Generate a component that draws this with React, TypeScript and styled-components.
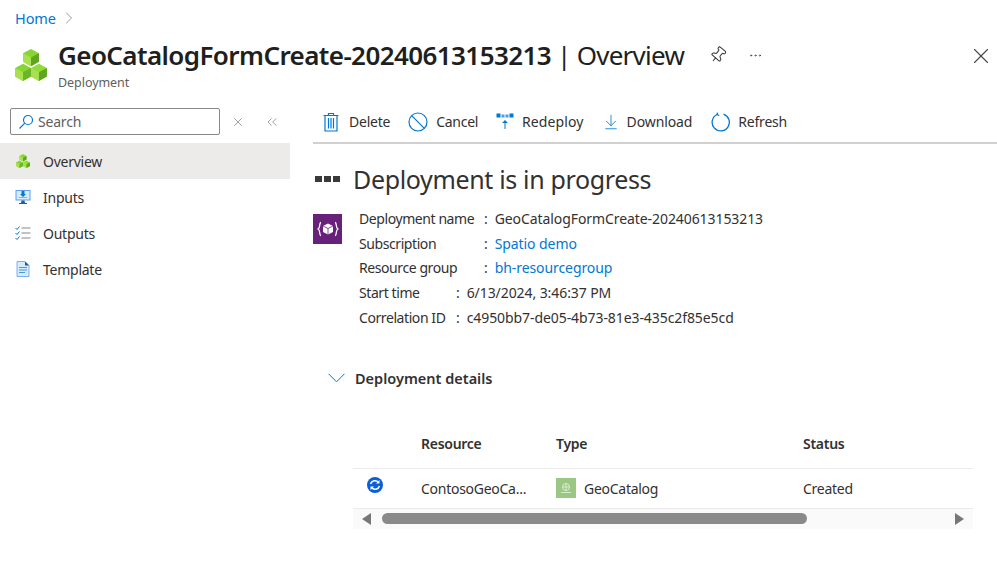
import React from "react";
import styled, { createGlobalStyle } from "styled-components";
import { ChevronRight, X, ChevronsLeft, Pin, MoreHorizontal, ArrowDownToLine } from "lucide-react";

const GlobalStyle = createGlobalStyle`
  html, body { margin: 0; padding: 0; background: #fff; }
  body {
    font-family: "Noto Sans", "Open Sans", "Liberation Sans", sans-serif;
    color: #323130;
    font-size: 14px;
    overflow: hidden;
  }
`;

const Page = styled.div`
  width: 997px;
  height: 568px;
  display: flex;
  flex-direction: column;
`;

const Breadcrumb = styled.nav`
  height: 35px;
  padding-left: 15px;
  display: flex;
  align-items: center;
  gap: 3px;
  color: #0078d4;
  font-size: 14.5px;
  letter-spacing: -0.1px;
  svg { color: #8a8886; }
`;

const Header = styled.header`
  height: 60px;
  display: flex;
  padding-left: 15px;
`;

const HeaderIcon = styled.svg`
  width: 32px;
  height: 32px;
  margin-top: 14px;
  flex: none;
`;

const TitleBlock = styled.div`
  margin-left: 11px;
  padding-top: 2px;
`;

const Title = styled.h1`
  margin: 0;
  font-size: 26px;
  line-height: 36px;
  font-weight: 400;
  letter-spacing: -0.75px;
  color: #201f1e;
  white-space: nowrap;
  strong { font-weight: 600; letter-spacing: -0.59px; }
`;

const Subtitle = styled.div`
  font-size: 12.5px;
  line-height: 17px;
  margin-top: 1px;
  color: #605e5c;
  letter-spacing: -0.05px;
`;

const HeaderActions = styled.div`
  display: flex;
  align-items: center;
  gap: 21px;
  height: 36px;
  margin-top: 2px;
  margin-left: 25px;
  color: #323130;
`;

const CloseButton = styled.div`
  margin-left: auto;
  margin-right: 3px;
  margin-top: 8px;
  height: 26px;
  color: #484644;
`;

const Body = styled.div`
  flex: 1;
  display: flex;
`;

const Sidebar = styled.aside`
  width: 290px;
  flex: none;
`;

const SearchRow = styled.div`
  display: flex;
  align-items: center;
  height: 27px;
  margin: 13px 0 8px 10px;
  color: #605e5c;
`;

const SearchBox = styled.div`
  width: 201px;
  height: 25px;
  border: 1px solid #8a8886;
  border-radius: 2px;
  display: flex;
  align-items: center;
  gap: 4px;
  padding-left: 7px;
  box-sizing: content-box;
  font-size: 14px;
  letter-spacing: -0.2px;
  color: #605e5c;
`;

const SearchAction = styled.span<{ $left: number }>`
  display: flex;
  margin-left: ${p => p.$left}px;
`;

const NavItem = styled.div<{ $active?: boolean }>`
  height: 36px;
  display: flex;
  align-items: center;
  padding-left: 15px;
  gap: 12px;
  font-size: 14px;
  letter-spacing: -0.25px;
  background: ${p => (p.$active ? "#edebe9" : "transparent")};
  color: #323130;
`;

const Main = styled.main`
  flex: 1;
  padding-left: 23px;
  min-width: 0;
`;

const Toolbar = styled.div`
  height: 50px;
  display: flex;
  align-items: center;
  padding-left: 8px;
  padding-top: 7px;
  border-bottom: 2px solid #d2d0ce;
  box-sizing: border-box;
  margin-top: -1px;
`;

const ToolButton = styled.div<{ $gap?: number; $after?: number; $spacing?: number }>`
  display: flex;
  align-items: center;
  gap: ${p => p.$gap ?? 8}px;
  margin-right: ${p => p.$after ?? 18}px;
  font-size: 14px;
  letter-spacing: ${p => p.$spacing ?? -0.22}px;
  color: #323130;
  svg { flex: none; }
`;

const StatusHeading = styled.div`
  display: flex;
  align-items: center;
  margin-top: 17px;
  height: 36px;
  margin-left: 2px;
`;

const Dots = styled.div`
  display: flex;
  gap: 2px;
  width: 38px;
`;

const Dot = styled.span`
  width: 7px;
  height: 6px;
  background: #3b3a39;
`;

const HeadingText = styled.h2`
  margin: 0;
  font-size: 25px;
  font-weight: 400;
  letter-spacing: -0.35px;
  color: #323130;
`;

const Summary = styled.div`
  display: flex;
  margin-top: 9px;
`;

const PurpleTile = styled.div`
  width: 29px;
  height: 30px;
  background: #68217a;
  margin-top: 8px;
  display: flex;
  align-items: center;
  justify-content: center;
  flex: none;
`;

const SummaryRows = styled.div`
  margin-left: 17px;
`;

const SummaryRow = styled.div`
  height: 24.8px;
  display: flex;
  align-items: center;
  font-size: 14px;
  letter-spacing: -0.08px;
  white-space: nowrap;
`;

const Label = styled.span<{ $width: number }>`
  width: ${p => p.$width}px;
  letter-spacing: -0.42px;
`;

const Colon = styled.span`
  margin-right: 7px;
`;

const Link = styled.span`
  color: #0078d4;
`;

const Details = styled.div`
  display: flex;
  align-items: center;
  margin-top: 36px;
  margin-left: 15px;
  height: 24px;
  gap: 10px;
  font-size: 14.5px;
  font-weight: 600;
  letter-spacing: 0;
`;

const DetailsChevron = styled.svg`
  width: 17px;
  height: 10px;
  flex: none;
`;

const Table = styled.div`
  margin: 30px 24px 0 40px;
`;

const TableRow = styled.div<{ $head?: boolean }>`
  display: grid;
  grid-template-columns: 68px 135px 247px 1fr;
  align-items: center;
  height: ${p => (p.$head ? "48px" : "39px")};
  border-bottom: 1px solid #edebe9;
  font-size: 14px;
  letter-spacing: -0.27px;
  font-weight: ${p => (p.$head ? 600 : 400)};
`;

const TypeCell = styled.div`
  display: flex;
  align-items: center;
  gap: 8px;
`;

const CatalogTile = styled.div`
  width: 20px;
  height: 20px;
  background: #9bc683;
  display: flex;
  align-items: center;
  justify-content: center;
`;

const ScrollBar = styled.div`
  height: 20px;
  background: #fafafa;
  display: flex;
  align-items: center;
  padding: 0 9px;
`;

const Thumb = styled.div`
  width: 425px;
  height: 11px;
  border-radius: 6px;
  background: #8a8a8a;
  margin-left: 11px;
`;

const Arrow = styled.span<{ $right?: boolean }>`
  width: 0;
  height: 0;
  border-top: 6px solid transparent;
  border-bottom: 6px solid transparent;
  ${p => (p.$right ? "border-left: 9px solid #777; margin-left: auto;" : "border-right: 9px solid #777;")}
`;

// green cubes, shared by the header and the nav row
const Cubes = () => (
  <>
    <path d="M16 2l7 3.800v7.400l-7 4-7-4V5.800z" fill="#86d633" />
    <path d="M16 9.500L9 5.800v7.400l7 4z" fill="#a9e04f" />
    <path d="M16 9.500l7-3.700v7.400l-7 4z" fill="#5ea61f" />
    <path d="M9 15l7 3.800v7.400l-7 4-7-4v-7.400z" fill="#86d633" />
    <path d="M9 22.500L2 18.800v7.400l7 4z" fill="#a9e04f" />
    <path d="M9 22.500l7-3.700v7.400l-7 4z" fill="#6cb526" />
    <path d="M23 15l7 3.800v7.400l-7 4-7-4v-7.400z" fill="#8fdc3a" />
    <path d="M23 22.500l-7-3.700v7.400l7 4z" fill="#a9e04f" />
    <path d="M23 22.500l7-3.700v7.400l-7 4z" fill="#5ea61f" />
  </>
);

const SmallIcon = styled.svg`
  width: 16px;
  height: 16px;
  flex: none;
`;

const ToolIcon = styled.svg<{ $width?: number }>`
  width: ${p => p.$width ?? 20}px;
  height: 20px;
  flex: none;
`;

export default function App() {
  return (
    <Page>
      <GlobalStyle />
      <Breadcrumb>
        Home <ChevronRight size={20} strokeWidth={1} />
      </Breadcrumb>
      <Header>
        <HeaderIcon viewBox="2 2 28 28.200"><Cubes /></HeaderIcon>
        <TitleBlock>
          <Title><strong>GeoCatalogFormCreate-20240613153213</strong> | Overview</Title>
          <Subtitle>Deployment</Subtitle>
        </TitleBlock>
        <HeaderActions>
          <Pin size={18} strokeWidth={1.3} style={{ transform: "rotate(40deg)" }} />
          <MoreHorizontal size={15} strokeWidth={1} />
        </HeaderActions>
        <CloseButton><X size={26} strokeWidth={1} /></CloseButton>
      </Header>
      <Body>
        <Sidebar>
          <SearchRow>
            <SearchBox>
              <SmallIcon viewBox="0 0 16 16" fill="none" stroke="#0078d4" strokeWidth="1.200">
                <circle cx="10" cy="6" r="4.500" />
                <path d="M6.800 9.200L1.500 14.500" />
              </SmallIcon>
              Search
            </SearchBox>
            <SearchAction $left={11}><X size={14} strokeWidth={1} /></SearchAction>
            <SearchAction $left={19}><ChevronsLeft size={16} strokeWidth={0.9} /></SearchAction>
          </SearchRow>
          <NavItem $active>
            <SmallIcon viewBox="0 0 32 32"><Cubes /></SmallIcon>
            Overview
          </NavItem>
          <NavItem>
            <SmallIcon viewBox="0 0 16 16">
              <rect x="0.500" y="1" width="15" height="10.500" fill="#5ea0ef" />
              <rect x="1.500" y="2" width="13" height="8.500" fill="#d6ecfb" />
              <path d="M6.500 2h3v3H11L8 8 5 5h1.500z" fill="#0078d4" />
              <path d="M4 8.500h8" stroke="#a0a0a0" strokeWidth="0.800" />
              <path d="M6.500 11.500h3l.5 2.500h2v1H4v-1h2z" fill="#1a5fa8" />
            </SmallIcon>
            Inputs
          </NavItem>
          <NavItem>
            <SmallIcon viewBox="0 0 16 16" fill="none">
              <path d="M0.500 3l1.500 1.500L4.500 1.500M0.500 8l1.500 1.500L4.500 6.500M0.500 13l1.500 1.500 2.500-3" stroke="#0078d4" strokeWidth="1" />
              <path d="M6.500 3h9M6.500 8h9M6.500 13h9" stroke="#8a8886" strokeWidth="1.200" />
            </SmallIcon>
            Outputs
          </NavItem>
          <NavItem>
            <SmallIcon viewBox="0 0 16 16">
              <path d="M2 0.500h8l4 4v11H2z" fill="#d6ecfb" stroke="#5ea0ef" strokeWidth="0.800" />
              <path d="M10 0.500l4 4h-4z" fill="#0a5ca8" />
              <path d="M4 6.500h8M4 9h8M4 11.500h6" stroke="#3a8fe0" strokeWidth="0.900" />
            </SmallIcon>
            Template
          </NavItem>
        </Sidebar>
        <Main>
          <Toolbar>
            <ToolButton>
              <ToolIcon viewBox="0 0 20 20" fill="none" stroke="#0078d4" strokeWidth="1.200">
                <path d="M2.500 3.500h15M7.500 3.500V1.500h5v2M4 3.500v15.500h12V3.500M7.500 6v10.500M10 6v10.500M12.500 6v10.500" />
              </ToolIcon>
              Delete
            </ToolButton>
            <ToolButton $spacing={-0.3}>
              <ToolIcon viewBox="0 0 20 20" fill="none" stroke="#0078d4" strokeWidth="1.200">
                <circle cx="10" cy="10" r="9" />
                <path d="M3.700 3.700l12.600 12.600" />
              </ToolIcon>
              Cancel
            </ToolButton>
            <ToolButton $spacing={0.1}>
              <ToolIcon $width={18} viewBox="0 0 18 20" fill="#0078d4">
                <rect x="0.500" y="1.500" width="4" height="4" />
                <rect x="5.500" y="2.500" width="3" height="3" opacity="0.700" />
                <rect x="9.500" y="2.500" width="3" height="3" opacity="0.700" />
                <rect x="13.500" y="1.500" width="4" height="4" />
                <path d="M9 8l-3 3h2.500v6h1v-6H12z" />
              </ToolIcon>
              Redeploy
            </ToolButton>
            <ToolButton $gap={7} $after={19} $spacing={-0.1}>
              <ArrowDownToLine size={18} strokeWidth={1.1} color="#0078d4" />
              Download
            </ToolButton>
            <ToolButton $gap={7}>
              <ToolIcon viewBox="0 0 20 20" fill="none" stroke="#0078d4" strokeWidth="1.300">
                <path d="M12.500 2.100a8.600 8.600 0 1 1-6.500 .4" />
                <path d="M6.500 0.600l-.4 2 2.200 .9" />
              </ToolIcon>
              Refresh
            </ToolButton>
          </Toolbar>
          <StatusHeading>
            <Dots><Dot /><Dot /><Dot /></Dots>
            <HeadingText>Deployment is in progress</HeadingText>
          </StatusHeading>
          <Summary>
            <PurpleTile>
              <svg width="22" height="18" viewBox="0 0 22 18" fill="none" stroke="#fff" strokeWidth="1.300">
                <path d="M4 2.500C2 2.500 3.500 8 1.200 9 3.500 10 2 15.500 4 15.500M18 2.500c2 0 .5 5.500 2.800 6.500-2.300 1-.8 6.500-2.800 6.500" />
                <path d="M11 3.500l5 2.500v6l-5 2.500L6 12V6z" fill="#fff" stroke="none" />
                <path d="M6 6l5 2.500L16 6M11 8.500v6" stroke="#68217a" strokeWidth="0.800" />
              </svg>
            </PurpleTile>
            <SummaryRows>
              <SummaryRow><Label $width={125}>Deployment name</Label><Colon>:</Colon>GeoCatalogFormCreate-20240613153213</SummaryRow>
              <SummaryRow><Label $width={125}>Subscription</Label><Colon>:</Colon><Link>Spatio demo</Link></SummaryRow>
              <SummaryRow><Label $width={125}>Resource group</Label><Colon>:</Colon><Link>bh-resourcegroup</Link></SummaryRow>
              <SummaryRow><Label $width={97}>Start time</Label><Colon>:</Colon>6/13/2024, 3:46:37 PM</SummaryRow>
              <SummaryRow><Label $width={97}>Correlation ID</Label><Colon>:</Colon>c4950bb7-de05-4b73-81e3-435c2f85e5cd</SummaryRow>
            </SummaryRows>
          </Summary>
          <Details>
            <DetailsChevron viewBox="0 0 17 10" fill="none" stroke="#0078d4" strokeWidth="1">
              <path d="M0.500 0.800L8.500 8.800 16.500 0.800" />
            </DetailsChevron>
            Deployment details
          </Details>
          <Table>
            <TableRow $head>
              <span />
              <span>Resource</span>
              <span>Type</span>
              <span>Status</span>
            </TableRow>
            <TableRow>
              <svg width="16" height="16" viewBox="0 0 16 16" style={{ marginLeft: 14, marginTop: -6 }}>
                <circle cx="8" cy="8" r="8" fill="#0a5fd8" />
                <path d="M3.500 7a4.600 4.600 0 0 1 8-1.500M12.500 9a4.600 4.600 0 0 1-8 1.500" fill="none" stroke="#fff" strokeWidth="1.500" />
                <path d="M12.500 3v3.500H9zM3.500 13V9.500H7z" fill="#fff" />
              </svg>
              <span>ContosoGeoCa...</span>
              <TypeCell>
                <CatalogTile>
                  <svg width="12" height="12" viewBox="0 0 12 12" fill="none" stroke="#e8f2e0" strokeWidth="0.800">
                    <circle cx="6" cy="5" r="3.500" />
                    <path d="M2.500 5h7M6 1.500v7M1 10.500h10" />
                  </svg>
                </CatalogTile>
                GeoCatalog
              </TypeCell>
              <span>Created</span>
            </TableRow>
            <ScrollBar>
              <Arrow />
              <Thumb />
              <Arrow $right />
            </ScrollBar>
          </Table>
        </Main>
      </Body>
    </Page>
  );
}
